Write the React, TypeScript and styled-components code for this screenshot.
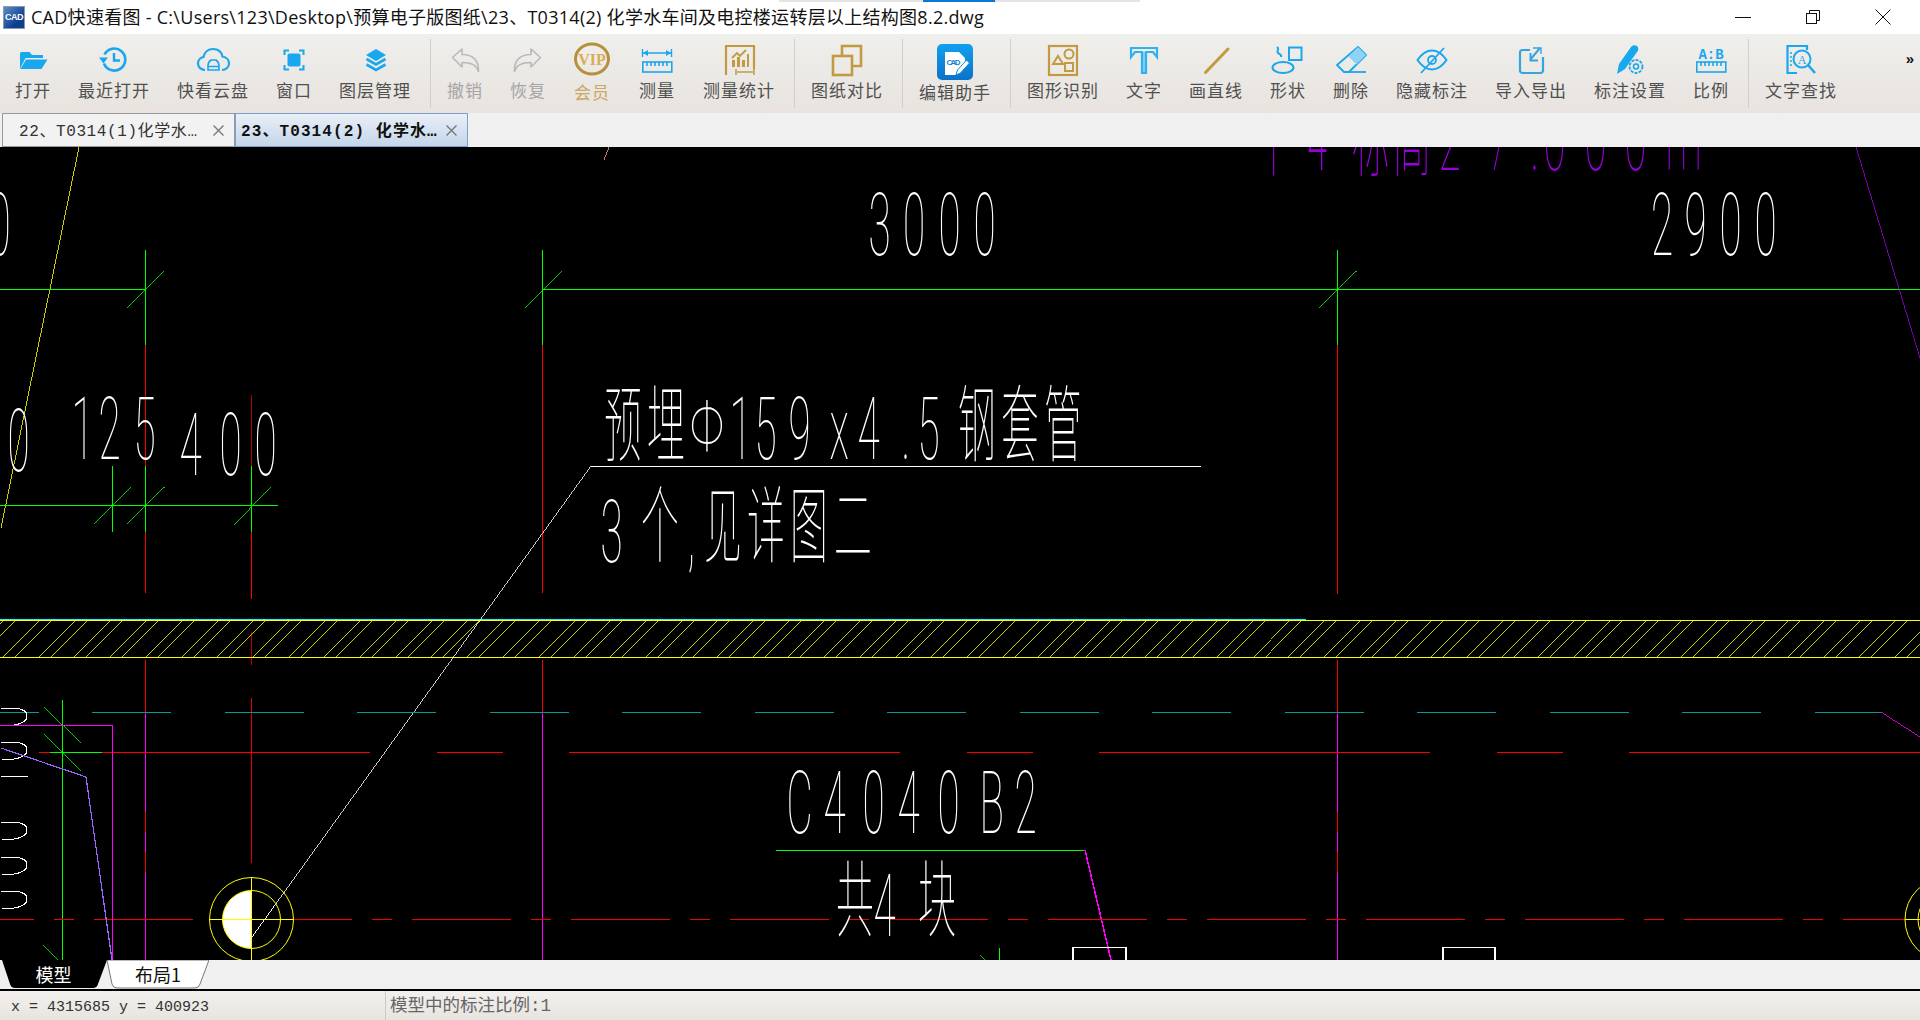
import React from 'react';
import styled, { createGlobalStyle } from 'styled-components';

const Global = createGlobalStyle`
  html, body { margin: 0; padding: 0; background: #fff; overflow: hidden; }
  #root { height: 100vh; }
`;

const CJK = '"Noto Sans CJK SC"';
const BLUE = '#19a7ee';
const GOLD = '#c39a42';
const GREY = '#b9b9b9';

const Page = styled.div`
  display: flex;
  flex-direction: column;
  height: 1020px;
  width: 1920px;
  overflow: hidden;
  font-family: ${CJK}, sans-serif;
`;

const TitleBar = styled.header`
  position: relative;
  flex: 0 0 34px;
  display: flex;
  align-items: center;
  background: #fff;
  padding-left: 3px;
`;
const Progress = styled.div`
  position: absolute;
  top: 0;
  left: 779px;
  width: 361px;
  height: 2px;
  background: #e4e4e4;
  &::after {
    content: '';
    position: absolute;
    left: 144px;
    width: 72px;
    height: 2px;
    background: #0a78d7;
  }
`;
const Logo = styled.div`
  width: 22px;
  height: 23px;
  background: linear-gradient(135deg, #5e8fc8, #0d3f8f 70%);
  border: 1px solid #8a9bb0;
  box-sizing: border-box;
  color: #fff;
  font: 700 9px/21px "Liberation Sans", sans-serif;
  text-align: center;
  letter-spacing: -0.5px;
  flex: none;
`;
const TitleText = styled.div`
  margin-left: 6px;
  font-family: "Open Sans", ${CJK}, sans-serif;
  font-size: 18px;
  letter-spacing: 0.28px;
  color: #111;
  white-space: nowrap;
  line-height: 34px;
`;
const WinButtons = styled.div`
  position: absolute;
  right: 2px;
  top: 0;
  display: flex;
`;
const WinButton = styled.div`
  width: 70px;
  height: 34px;
  display: flex;
  align-items: center;
  justify-content: center;
`;

const Toolbar = styled.nav`
  flex: 0 0 79px;
  display: flex;
  align-items: flex-start;
  box-sizing: border-box;
  padding: 8px 0 0 1.5px;
  background: linear-gradient(#efefec, #e8e3df);
  position: relative;
`;
const Tool = styled.div<{ $wide?: boolean }>`
  flex: none;
  display: flex;
  flex-direction: column;
  align-items: center;
  padding: 0 ${(p) => (p.$wide ? '14.5px' : '13.5px')};
`;
const IconBox = styled.div`
  width: 36px;
  height: 38px;
  display: flex;
  justify-content: center;
  svg { display: block; overflow: visible; }
`;
const ToolLabel = styled.div<{ $gold?: boolean; $dim?: boolean; $low?: boolean }>`
  font-size: 17px;
  letter-spacing: 1px;
  line-height: 22px;
  white-space: nowrap;
  margin-top: ${(p) => (p.$low ? '1px' : '-1px')};
  color: ${(p) => (p.$gold ? '#c9a765' : p.$dim ? '#a5a5a5' : '#505050')};
`;
const Divider = styled.div`
  flex: none;
  width: 1px;
  height: 69px;
  margin: -3px 2.5px 0 5.5px;
  background: #cfcfcc;
`;
const More = styled.div`
  position: absolute;
  right: 6px;
  top: 15px;
  font: 700 15px/20px "Liberation Sans", sans-serif;
  color: #111;
`;

const TabStrip = styled.div`
  flex: 0 0 34px;
  display: flex;
  align-items: stretch;
  box-sizing: border-box;
  padding-left: 2px;
  background: #f0f0f0;
`;
const DocTab = styled.div<{ $active?: boolean }>`
  width: 233px;
  box-sizing: border-box;
  display: flex;
  align-items: center;
  justify-content: space-between;
  padding: 0 10px 2px ${(p) => (p.$active ? '5px' : '16px')};
  border: 1px solid ${(p) => (p.$active ? '#7d9fce' : '#9a9a9a')};
  background: ${(p) => (p.$active ? 'linear-gradient(#e9eff7, #c4d6ea)' : '#f2f2f2')};
  font-family: "Liberation Mono", ${CJK}, monospace;
  font-size: 16px;
  letter-spacing: ${(p) => (p.$active ? '1.1px' : '0.6px')};
  font-weight: ${(p) => (p.$active ? 700 : 400)};
  color: ${(p) => (p.$active ? '#111' : '#333')};
  white-space: nowrap;
  svg { flex: none; position: relative; top: 1px; }
`;

const Canvas = styled.main`
  flex: 0 0 813px;
  background: #000;
  overflow: hidden;
  svg { display: block; }
`;
const CadText = styled.text`
  font-family: Roboto, ${CJK}, sans-serif;
  font-weight: 100;
`;
const CadCjk = styled.text`
  font-family: ${CJK}, sans-serif;
  font-weight: 100;
`;

const LayoutBar = styled.div`
  flex: 0 0 31px;
  box-sizing: border-box;
  display: flex;
  background: #f0f0f0;
  border-bottom: 2px solid #000;
`;
const LayoutTab = styled.div<{ $active?: boolean; $w: number }>`
  position: relative;
  width: ${(p) => p.$w}px;
  height: 29px;
  display: flex;
  align-items: center;
  justify-content: center;
  font-size: 18px;
  color: ${(p) => (p.$active ? '#fff' : '#111')};
  svg { position: absolute; left: 0; top: 0; }
  span { position: relative; top: -1px; }
`;

const StatusBar = styled.footer`
  flex: 1;
  display: flex;
  align-items: center;
  background: linear-gradient(#f2f0ed, #e8e4e0);
`;
const Coord = styled.div`
  width: 374px;
  padding: 3px 0 0 11px;
  font: 15px "Liberation Mono", monospace;
  color: #333;
  white-space: nowrap;
`;
const StatusMsg = styled.div`
  border-left: 1px solid #c9c9c9;
  padding: 2px 0 0 4px;
  line-height: 27px;
  font-family: "Liberation Mono", ${CJK}, monospace;
  font-size: 17.5px;
  color: #666;
`;

/* ---------- toolbar icons ---------- */
const I = ({ children }: { children: React.ReactNode }) => (
  <svg width="36" height="36" viewBox="0 0 36 36" fill="none">
    {children}
  </svg>
);
const RulerMark = ({ c, y }: { c: string; y: number }) => (
  <g stroke={c} strokeWidth="1.6" fill="none">
    <rect x="3.8" y={y} width="29" height="10" />
    <path d={`M8 ${y}v4M12 ${y}v4M16 ${y}v4M20 ${y}v4M24 ${y}v4M28 ${y}v4`} />
  </g>
);

const icons: Record<string, React.ReactNode> = {
  open: (
    <I>
      <path d="M5 27V11.5a1.5 1.5 0 0 1 1.5-1.5h8l2.5 3h11v3H10.5z" fill={BLUE} />
      <path d="M11 17.5h21.5L26.5 27H5.5z" fill={BLUE} />
    </I>
  ),
  recent: (
    <I>
      <path d="M8.5 12.5A11 11 0 1 1 8 21.5" stroke={BLUE} strokeWidth="2.6" />
      <path d="M3 15.5h9l-4.5 6z" fill={BLUE} />
      <path d="M18 11v7.5h6" stroke={BLUE} strokeWidth="2.4" />
    </I>
  ),
  cloud: (
    <I>
      <path d="M10 28C5.5 28 3 24.5 3 21.5 3 18 5.5 15.5 8.5 15 9.5 10 13.5 7 18 7c5 0 8.5 3 9.5 7.5 4 .5 6.5 3.5 6.5 7 0 3.5-3 6.5-7 6.5" stroke={BLUE} strokeWidth="2.2" />
      <path d="M13 28v-4.5c0-2 1-4 3-5.500h5c2 1.500 3 3.500 3 5.500V28zM13 24.500h11" stroke={BLUE} strokeWidth="1.6" />
    </I>
  ),
  win: (
    <I>
      <path d="M8.5 13V8.500H13M23 8.500h4.500V13M27.500 23v4.500H23M13 27.500H8.500V23" stroke={BLUE} strokeWidth="2" />
      <rect x="11.5" y="11.5" width="13" height="13" rx="2" fill={BLUE} />
    </I>
  ),
  layers: (
    <I>
      <path d="M19 7l10 6-10 6-10-6z" fill={BLUE} />
      <path d="M9.5 17l9.5 5.500 9.500-5.500M9.500 22.500l9.500 5.500 9.500-5.500" stroke={BLUE} strokeWidth="2.6" />
    </I>
  ),
  undo: (
    <I>
      <path d="M5.5 15.500L15 7v5.500c11 0 17 6 16.500 17-1.500-6-7-9-16.500-9V25z" stroke={GREY} strokeWidth="1.6" strokeLinejoin="round" />
    </I>
  ),
  redo: (
    <I>
      <path d="M30.5 15.500L21 7v5.500c-11 0-17 6-16.500 17 1.500-6 7-9 16.500-9V25z" stroke={GREY} strokeWidth="1.6" strokeLinejoin="round" />
    </I>
  ),
  vip: (
    <I>
      <ellipse cx="18" cy="17" rx="16.5" ry="15" stroke="#b8903c" strokeWidth="3" />
      <text x="18" y="22.5" textAnchor="middle" fontFamily='"Liberation Serif", serif' fontWeight="700" fontSize="16" fill="#d9ad55">VIP</text>
    </I>
  ),
  measure: (
    <I>
      <path d="M3.5 7v8M32.500 7v8M4 11h28" stroke={BLUE} strokeWidth="1.4" />
      <path d="M4 11l5-3v6zM32 11l-5-3v6z" fill={BLUE} />
      <RulerMark c={BLUE} y={20} />
    </I>
  ),
  stats: (
    <I>
      <path d="M5 33V4h28v23" stroke={GOLD} strokeWidth="2.2" />
      <path d="M11 16l5-5 3 3 6-6" stroke={GOLD} strokeWidth="1.8" />
      <path d="M11 18h3v7h-3zM16 15h3v10h-3zM21 18h3v7h-3zM26 12h2v13h-2z" fill={GOLD} />
      <path d="M15 27v6M33 27v6M16 30h16" stroke={GOLD} strokeWidth="1.5" />
    </I>
  ),
  compare: (
    <I>
      <path d="M13 13V4h19v20h-9" stroke={GOLD} strokeWidth="2.6" />
      <rect x="4" y="14" width="19" height="19" stroke={GOLD} strokeWidth="2.6" />
    </I>
  ),
  edit: (
    <svg width="36" height="36" viewBox="0 0 36 36" fill="none" style={{ marginTop: 2 }}>
      <defs>
        <linearGradient id="ed" x1="0" y1="0" x2="0" y2="1">
          <stop offset="0" stopColor="#12a0ee" />
          <stop offset="1" stopColor="#0a72c9" />
        </linearGradient>
      </defs>
      <rect width="36" height="36" rx="5" fill="url(#ed)" />
      <path d="M8 8h14l6 6v7l-9 10H8z" fill="#fff" />
      <text x="9.5" y="21" fontFamily='"Liberation Sans", sans-serif' fontWeight="700" fontSize="8" fill="#1283d6" textLength="14">CAD</text>
      <path d="M19 31l1.5-5 9-10 3 3-9 10z" fill="#fff" stroke="#0f86d8" strokeWidth="1" />
    </svg>
  ),
  shapes: (
    <I>
      <rect x="4" y="4" width="28" height="29" stroke={GOLD} strokeWidth="2.2" />
      <circle cx="24" cy="12" r="4.5" stroke={GOLD} strokeWidth="2" />
      <path d="M13 14l5 8H8z" stroke={GOLD} strokeWidth="2" />
      <rect x="20" y="21" width="8" height="8" stroke={GOLD} strokeWidth="2" />
    </I>
  ),
  text: (
    <I>
      <path d="M5 6h26v9l-4-5h-7v21h-4V10H9l-4 5z" stroke="#2db4f0" strokeWidth="2.2" />
      <path d="M18 10v21" stroke="#2db4f0" strokeWidth="1" />
    </I>
  ),
  line: (
    <I>
      <path d="M7.5 30.5L30 7" stroke={GOLD} strokeWidth="3" strokeLinecap="round" />
    </I>
  ),
  shape: (
    <I>
      <rect x="19" y="5.5" width="12.5" height="12.5" stroke={BLUE} strokeWidth="2" />
      <ellipse cx="13" cy="25.5" rx="10.5" ry="5.5" stroke={BLUE} strokeWidth="2" />
      <path d="M7 5c3 2-1 4 1 6s4 1 3 4" stroke={BLUE} strokeWidth="2" />
    </I>
  ),
  erase: (
    <I>
      <path d="M25 5l8 8-17 17H11l-7-7z" stroke={BLUE} strokeWidth="1.8" strokeLinejoin="round" />
      <path d="M25 5l8 8-9.5 9.5-8-8z" fill="#8ed2f5" />
      <path d="M15 30h18" stroke={BLUE} strokeWidth="1.8" />
    </I>
  ),
  hide: (
    <I>
      <path d="M3.5 18C9 10 14 8.5 18 8.5S27 10 32.5 18C27 26 22 27.5 18 27.5S9 26 3.5 18z" stroke={BLUE} strokeWidth="2" />
      <circle cx="18" cy="18" r="4" stroke={BLUE} strokeWidth="1.8" />
      <path d="M7 31L30 6" stroke={BLUE} strokeWidth="1.8" />
    </I>
  ),
  io: (
    <I>
      <path d="M17 8H9.5A2.5 2.5 0 0 0 7 10.5v18A2.5 2.5 0 0 0 9.5 31h18a2.5 2.5 0 0 0 2.5-2.5V15" stroke="#35a5dc" strokeWidth="2.2" />
      <path d="M27 6L17 18M17.500 11v7.500h7.500" stroke="#35a5dc" strokeWidth="2" />
      <path d="M20 6h8v6" stroke="#35a5dc" strokeWidth="1.4" />
    </I>
  ),
  settings: (
    <I>
      <path d="M5 32l2-10L19 5c2-2.5 6-2 7 .5 .7 2-.3 3.5-1 4.5L13 27z" fill={BLUE} />
      <circle cx="24" cy="24.5" r="7.5" fill="#ebe8e4" />
      <circle cx="24" cy="24.5" r="6.5" stroke={BLUE} strokeWidth="1.8" strokeDasharray="3 1.2" />
      <circle cx="24" cy="24.5" r="2.5" stroke={BLUE} strokeWidth="1.6" />
    </I>
  ),
  ratio: (
    <I>
      <text x="18" y="17" textAnchor="middle" fontFamily='"Liberation Mono", monospace' fontWeight="700" fontSize="14" fill={BLUE}>A:B</text>
      <RulerMark c={BLUE} y={20} />
    </I>
  ),
  find: (
    <I>
      <path d="M13 4H4.5v27H14" stroke={BLUE} strokeWidth="2.2" />
      <path d="M13 4h11v4" stroke={BLUE} strokeWidth="2.2" />
      <path d="M8 10v16" stroke={BLUE} strokeWidth="1.5" strokeDasharray="2 2" />
      <circle cx="19" cy="17" r="8.5" stroke={BLUE} strokeWidth="2" />
      <text x="19" y="21.5" textAnchor="middle" fontFamily='"Liberation Serif", serif' fontSize="12" fill={BLUE}>A</text>
      <path d="M25 23l7 8" stroke={BLUE} strokeWidth="2.6" />
    </I>
  ),
};

type Item = { k: string; t: string; dim?: boolean; gold?: boolean; low?: boolean; wide?: boolean } | 'sep';
const tools: Item[] = [
  { k: 'open', t: '打开' },
  { k: 'recent', t: '最近打开' },
  { k: 'cloud', t: '快看云盘' },
  { k: 'win', t: '窗口' },
  { k: 'layers', t: '图层管理' },
  'sep',
  { k: 'undo', t: '撤销', dim: true },
  { k: 'redo', t: '恢复', dim: true },
  { k: 'vip', t: '会员', gold: true, low: true, wide: true },
  { k: 'measure', t: '测量', wide: true },
  { k: 'stats', t: '测量统计' },
  'sep',
  { k: 'compare', t: '图纸对比' },
  'sep',
  { k: 'edit', t: '编辑助手', low: true },
  'sep',
  { k: 'shapes', t: '图形识别' },
  { k: 'text', t: '文字' },
  { k: 'line', t: '画直线' },
  { k: 'shape', t: '形状' },
  { k: 'erase', t: '删除' },
  { k: 'hide', t: '隐藏标注' },
  { k: 'io', t: '导入导出' },
  { k: 'settings', t: '标注设置' },
  { k: 'ratio', t: '比例' },
  'sep',
  { k: 'find', t: '文字查找' },
];

/* ---------- CAD drawing data ---------- */
const GREEN = '#00ff00';
const RED = '#ff0000';
const MAG = '#ff00ff';
const YEL = '#ffff00';
const TEAL = '#009c9c';
const WHITE = '#ffffff';

type Seg = [number, number, number, number, string, number?];
const segs: Seg[] = [
  [79, 147, 1, 528, YEL],
  [609, 147, 604, 160, '#ff9a80'],
  [0, 289.5, 145, 289.5, GREEN, 1.5],
  [542, 289.5, 1920, 289.5, GREEN, 1.5],
  [145.5, 250, 145.5, 345, GREEN],
  [542.5, 250, 542.5, 345, GREEN],
  [1337.5, 250, 1337.5, 345, GREEN],
  [145.5, 345, 145.5, 466, RED],
  [145.5, 532, 145.5, 593, RED],
  [542.5, 345, 542.5, 593, RED],
  [1337.5, 345, 1337.5, 594, RED],
  [127, 308, 164, 271, GREEN],
  [525.5, 308, 562, 271, GREEN],
  [1319, 308, 1356.5, 271, GREEN],
  [0, 505.5, 278, 505.5, GREEN, 1.5],
  [112.5, 466, 112.5, 532, GREEN, 1.5],
  [145.5, 466, 145.5, 532, GREEN],
  [251.5, 466, 251.5, 532, GREEN],
  [94, 524, 131, 487, GREEN],
  [127, 524, 164.5, 487, GREEN],
  [233.5, 524, 270.6, 487, GREEN],
  [251.5, 395, 251.5, 466, '#b00000'],
  [251.5, 532, 251.5, 599, RED],
  [251.5, 632, 251.5, 665, '#c00000'],
  [0, 619.5, 1306, 619.5, '#00ffff'],
  [0, 620.5, 1920, 620.5, YEL],
  [0, 657.5, 1920, 657.5, YEL],
  [591, 466, 252, 937, WHITE],
  [591, 466.5, 1201, 466.5, WHITE, 1.5],
  [145.5, 660, 145.5, 712, RED],
  [145.5, 712, 145.5, 960, MAG],
  [145.5, 812, 145.5, 832, RED],
  [145.5, 852, 145.5, 872, RED],
  [542.5, 660, 542.5, 712, RED],
  [542.5, 712, 542.5, 960, MAG],
  [1337.5, 660, 1337.5, 712, RED],
  [1337.5, 712, 1337.5, 960, MAG],
  [1337.5, 812, 1337.5, 832, RED],
  [1337.5, 852, 1337.5, 872, RED],
  [251.5, 698, 251.5, 863, '#e00000'],
  [1881, 712, 1920, 737, MAG],
  [39, 752.5, 50, 752.5, RED, 1.5],
  [50, 752.5, 102, 752.5, GREEN, 1.5],
  [102, 752.5, 370, 752.5, RED, 1.5],
  [437, 752.5, 503, 752.5, RED, 1.5],
  [569, 752.5, 900, 752.5, RED, 1.5],
  [967, 752.5, 1033, 752.5, RED, 1.5],
  [1099, 752.5, 1430, 752.5, RED, 1.5],
  [1497, 752.5, 1563, 752.5, RED, 1.5],
  [1629, 752.5, 1920, 752.5, RED, 1.5],
  [62.5, 700, 62.5, 960, GREEN, 1.5],
  [44, 707, 81, 743, GREEN],
  [44, 734, 81, 771, GREEN],
  [43, 945, 58, 960, GREEN],
  [776, 850.5, 1085, 850.5, GREEN, 1.5],
  [1085, 850, 1111, 960, MAG, 1.5],
  [999.5, 948, 999.5, 960, GREEN],
  [980, 955, 985, 960, GREEN],
];
// teal dashes
segs.push([0, 712.5, 39, 712.5, TEAL]);
for (let k = 0; k < 14; k++) {
  const a = 92 + 132.5 * k;
  segs.push([a, 712.5, k === 13 ? 1881 : a + 79, 712.5, TEAL]);
}
// red centre line (thin long-short)
for (let k = -1; k < 12; k++) {
  const a = 94 + 159 * k;
  segs.push([a, 919.5, Math.min(a + 99, 1905), 919.5, '#f00000']);
  const s = a + 119;
  if (s < 1900 && s !== 213) segs.push([s, 919.5, s + 20, 919.5, '#f00000']);
}
// hatch
for (let k = -1; k < 56; k++) {
  for (const off of [39, 51]) {
    const top = off + 35.7 * k;
    segs.push([top, 621, top - 36, 657, YEL]);
  }
}

const stubs = [708, 742, 822, 857, 891];

function CadLabel({ xs, y, text, size = 88, sx = 0.46 }: { xs: number[]; y: number; text: string; size?: number; sx?: number }) {
  return (
    <CadText transform={`scale(${sx} 1)`} x={xs.map((v) => (v - 2.5) / sx).join(' ')} y={y} fontSize={size}>
      {text}
    </CadText>
  );
}
function CadChars({ xs, y, text, size = 84, sx = 0.45 }: { xs: number[]; y: number; text: string; size?: number; sx?: number }) {
  return (
    <CadCjk transform={`scale(${sx} 1)`} x={xs.map((v) => v / sx).join(' ')} y={y} fontSize={size}>
      {text}
    </CadCjk>
  );
}

const Drawing = () => (
  <svg width="1920" height="813" viewBox="0 147 1920 813" shapeRendering="crispEdges">
    {segs.map(([x1, y1, x2, y2, c, w], i) => (
      <line key={i} x1={x1} y1={y1} x2={x2} y2={y2} stroke={c} strokeWidth={w ?? (x1 !== x2 && y1 !== y2 ? 0.8 : 1)} />
    ))}

    {stubs.map((y) => (
      <path key={y} d={`M1 ${y}H14Q27 ${y + 1} 27 ${y + 8}Q27 ${y + 15} 14 ${y + 17}L2 ${y + 18}`} stroke="#fff" fill="none" />
    ))}
    <line x1="1" y1="776.5" x2="28" y2="776.5" stroke="#fff" />

    <path d="M0 725.5H112.5V960" stroke={MAG} strokeWidth="1.5" fill="none" />
    <path d="M1 748L86 777L112 960" stroke="#9966ff" strokeWidth="1.2" fill="none" />
    <path d="M1073 960V947.5H1126V960M1443 960V947.5H1495V960" stroke="#fff" strokeWidth="1.5" fill="none" />

    <circle cx="251.5" cy="919.5" r="42" stroke={YEL} fill="none" shapeRendering="auto" />
    <path d="M251.5 890.5A29 29 0 0 0 251.5 948.5Z" fill="#fff" shapeRendering="auto" />
    <circle cx="251.5" cy="919.5" r="29" stroke={YEL} fill="none" shapeRendering="auto" />
    <path d="M209 919.5H294M251.5 877V960" stroke={YEL} fill="none" />
    <line x1="252" y1="937" x2="275" y2="905" stroke="#fff" strokeWidth="0.8" />
    <circle cx="1947" cy="919.5" r="42" stroke={YEL} fill="none" shapeRendering="auto" />
    <circle cx="1947" cy="919.5" r="29" stroke={YEL} fill="none" shapeRendering="auto" />
    <path d="M1905 919.5H1920" stroke={YEL} strokeWidth="1.5" />

    <line x1="1856" y1="147" x2="1920" y2="358" stroke="#9900dd" strokeWidth="0.8" />

    <g fill="#fff" shapeRendering="auto">
      <CadLabel xs={[871, 905.5, 941, 976]} y={255} text="3000" />
      <CadLabel xs={[1653.5, 1687, 1722, 1757]} y={255} text="2900" />
      <CadLabel xs={[-9]} y={255} text="0" />
      <CadLabel xs={[10]} y={471} text="0" />
      <CadLabel xs={[74, 101, 136]} y={459} text="125" />
      <CadLabel xs={[182, 222, 257]} y={475} text="400" />
      <CadLabel xs={[732, 757, 791, 832, 860, 904, 920]} y={459} text="159x4.5" />
      <CadLabel xs={[603]} y={562} text="3" />
      <CadLabel xs={[690]} y={562} text="," />
      <CadLabel xs={[789, 826, 865, 900, 940, 982, 1017]} y={833} text="C4040B2" />
      <CadLabel xs={[692]} y={452} size={72} sx={0.68} text="Φ" />
      <CadLabel xs={[876]} y={936} text="4" />
      <g fill="#9900dd">
        <CadLabel xs={[1441, 1490, 1533, 1546, 1587, 1627, 1668]} y={170} text="27.000m" />
        <CadChars xs={[1258, 1308, 1352, 1393]} y={170} text="卜4标高" />
      </g>
      <CadChars xs={[604, 647]} y={455} text="预埋" />
      <CadChars xs={[958, 1001, 1044]} y={455} text="钢套管" />
      <CadChars xs={[641, 704, 747, 790, 834]} y={556} text="个见详图二" />
      <CadChars xs={[836, 918]} y={930} text="共块" />
    </g>
  </svg>
);

const X = ({ s = 11, c = '#777', w = 1.4 }: { s?: number; c?: string; w?: number }) => (
  <svg width={s} height={s} viewBox={`0 0 ${s} ${s}`}>
    <path d={`M.5 .5L${s - 0.5} ${s - 0.5}M${s - 0.5} .5L.5 ${s - 0.5}`} stroke={c} strokeWidth={w} />
  </svg>
);

export default function App() {
  return (
    <Page>
      <Global />
      <TitleBar>
        <Progress />
        <Logo>CAD</Logo>
        <TitleText>CAD快速看图 - C:\Users\123\Desktop\预算电子版图纸\23、T0314(2) 化学水车间及电控楼运转层以上结构图8.2.dwg</TitleText>
        <WinButtons>
          <WinButton>
            <svg width="16" height="16" viewBox="0 0 16 16"><path d="M0 8.5H16" stroke="#111" /></svg>
          </WinButton>
          <WinButton>
            <svg width="16" height="16" viewBox="0 0 16 16" fill="none"><rect x="1.5" y="4.5" width="10" height="10" stroke="#111" /><path d="M4.500 4V1.500H14.500V11.500H12" stroke="#111" /></svg>
          </WinButton>
          <WinButton>
            <X s={16} c="#111" w={1} />
          </WinButton>
        </WinButtons>
      </TitleBar>

      <Toolbar>
        {tools.map((t, i) =>
          t === 'sep' ? (
            <Divider key={i} />
          ) : (
            <Tool key={t.k} $wide={t.wide}>
              <IconBox>{icons[t.k]}</IconBox>
              <ToolLabel $dim={t.dim} $gold={t.gold} $low={t.low}>{t.t}</ToolLabel>
            </Tool>
          ),
        )}
        <More>»</More>
      </Toolbar>

      <TabStrip>
        <DocTab>
          <span>22、T0314(1)化学水…</span>
          <X />
        </DocTab>
        <DocTab $active>
          <span>23、T0314(2) 化学水…</span>
          <X />
        </DocTab>
      </TabStrip>

      <Canvas>
        <Drawing />
      </Canvas>

      <LayoutBar>
        <LayoutTab $active $w={107}>
          <svg width="107" height="29" viewBox="0 0 107 29"><path d="M2 0H107L98 24Q97 28 93 28H15Q11 28 10 24Z" fill="#000" /></svg>
          <span>模型</span>
        </LayoutTab>
        <LayoutTab $w={102}>
          <svg width="102" height="29" viewBox="0 0 102 29"><path d="M0 0H102L93 24Q92 28 88 28H10Q6 28 5 24Z" fill="#fff" stroke="#777" /></svg>
          <span>布局1</span>
        </LayoutTab>
      </LayoutBar>

      <StatusBar>
        <Coord>x = 4315685 y = 400923</Coord>
        <StatusMsg>模型中的标注比例:1</StatusMsg>
      </StatusBar>
    </Page>
  );
}
